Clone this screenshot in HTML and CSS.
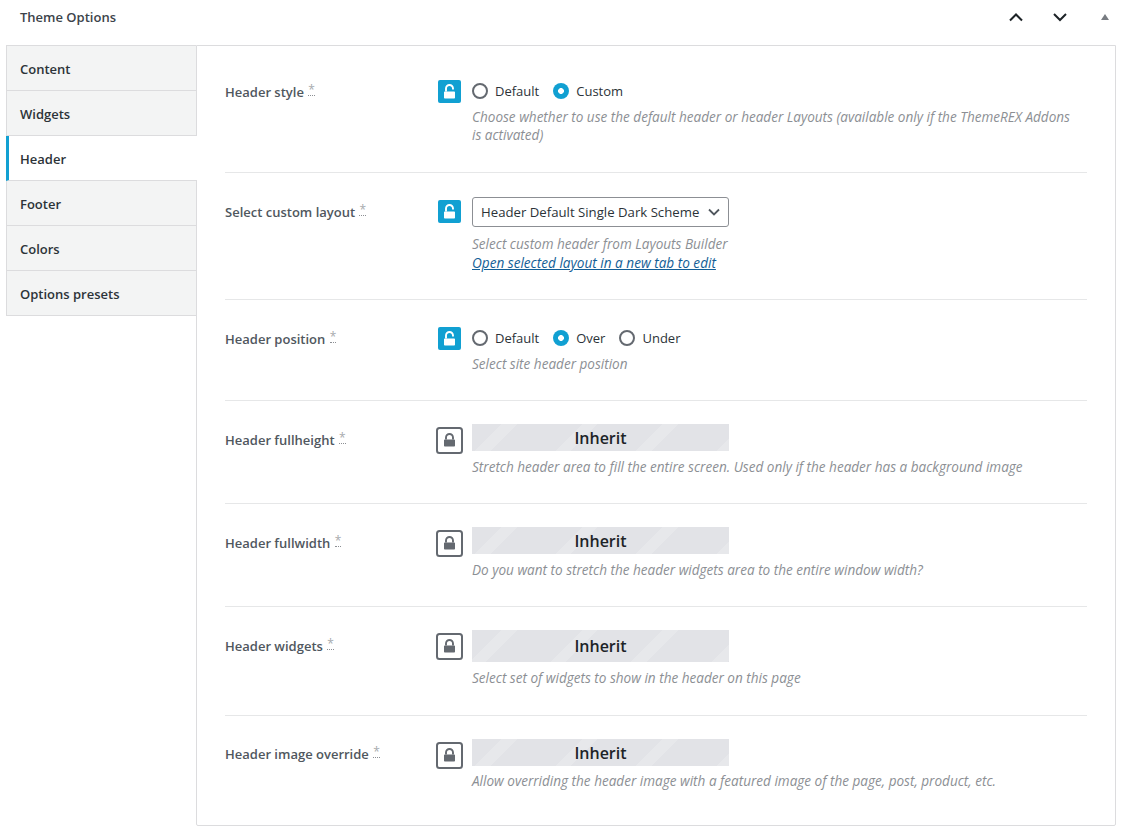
FILE: index.html
```html
<!DOCTYPE html>
<html lang="en">
<head>
<meta charset="utf-8">
<title>Theme Options</title>
<link rel="stylesheet" href="styles.css">
</head>
<body>
<header class="bar">
  <h2 class="bar-title">Theme Options</h2>
  <div class="bar-actions">
    <svg class="chev" viewBox="0 0 16 10"><path d="M2 8.500 8 2.500l6 6" /></svg>
    <svg class="chev" viewBox="0 0 16 10"><path d="M2 2 8 8l6-6" /></svg>
    <span class="tri"></span>
  </div>
</header>
<main class="panel">
  <nav class="tabs">
    <a class="tab">Content</a>
    <a class="tab">Widgets</a>
    <a class="tab active">Header</a>
    <a class="tab">Footer</a>
    <a class="tab">Colors</a>
    <a class="tab">Options presets</a>
  </nav>
  <section class="fields">
    <div class="row first">
      <div class="label">Header style <span class="star">*</span></div>
      <svg class="lock open" viewBox="0 0 23 23"><use href="#u"/></svg>
      <div class="ctl">
        <div class="radios">
          <span class="radio">Default</span>
          <span class="radio on">Custom</span>
        </div>
        <p class="hint">Choose whether to use the default header or header Layouts (available only if the ThemeREX Addons is activated)</p>
      </div>
    </div>
    <div class="row sel">
      <div class="label">Select custom layout <span class="star">*</span></div>
      <svg class="lock open" viewBox="0 0 23 23"><use href="#u"/></svg>
      <div class="ctl">
        <div class="select">Header Default Single Dark Scheme
          <svg class="caret" viewBox="0 0 12 8"><path d="M1 1.500l5 5 5-5"/></svg>
        </div>
        <p class="hint">Select custom header from Layouts Builder</p>
        <a class="hint-link">Open selected layout in a new tab to edit</a>
      </div>
    </div>
    <div class="row pos">
      <div class="label">Header position <span class="star">*</span></div>
      <svg class="lock open" viewBox="0 0 23 23"><use href="#u"/></svg>
      <div class="ctl">
        <div class="radios">
          <span class="radio">Default</span>
          <span class="radio on">Over</span>
          <span class="radio">Under</span>
        </div>
        <p class="hint">Select site header position</p>
      </div>
    </div>
    <div class="row inh">
      <div class="label">Header fullheight <span class="star">*</span></div>
      <svg class="lock closed" viewBox="0 0 27 27"><use href="#l"/></svg>
      <div class="ctl">
        <div class="inherit">Inherit</div>
        <p class="hint">Stretch header area to fill the entire screen. Used only if the header has a background image</p>
      </div>
    </div>
    <div class="row inh">
      <div class="label">Header fullwidth <span class="star">*</span></div>
      <svg class="lock closed" viewBox="0 0 27 27"><use href="#l"/></svg>
      <div class="ctl">
        <div class="inherit">Inherit</div>
        <p class="hint">Do you want to stretch the header widgets area to the entire window width?</p>
      </div>
    </div>
    <div class="row inh tall">
      <div class="label">Header widgets <span class="star">*</span></div>
      <svg class="lock closed" viewBox="0 0 27 27"><use href="#l"/></svg>
      <div class="ctl">
        <div class="inherit">Inherit</div>
        <p class="hint">Select set of widgets to show in the header on this page</p>
      </div>
    </div>
    <div class="row inh last">
      <div class="label">Header image override <span class="star">*</span></div>
      <svg class="lock closed" viewBox="0 0 27 27"><use href="#l"/></svg>
      <div class="ctl">
        <div class="inherit">Inherit</div>
        <p class="hint">Allow overriding the header image with a featured image of the page, post, product, etc.</p>
      </div>
    </div>
  </section>
</main>
<svg class="defs" width="0" height="0">
  <symbol id="u" viewBox="0 0 23 23">
    <rect width="23" height="23" rx="2" fill="#11a0d2"/>
    <path d="M6.800 11.500h9.400a.8.8 0 0 1 .8.8v5.400a.8.8 0 0 1-.8.8H6.800a.8.8 0 0 1-.8-.8v-5.400a.8.8 0 0 1 .8-.8z" fill="#fff"/>
    <path d="M8 11.500V8.500a3.500 3.500 0 0 1 7 0v1" fill="none" stroke="#fff" stroke-width="1.900"/>
  </symbol>
  <symbol id="l" viewBox="0 0 27 27">
    <rect x="1" y="1" width="25" height="25" rx="2.500" fill="none" stroke="#646970" stroke-width="2"/>
    <path d="M8.800 12.500h9.400a.8.8 0 0 1 .8.8v5.400a.8.8 0 0 1-.8.8H8.800a.8.8 0 0 1-.8-.8v-5.400a.8.8 0 0 1 .8-.8z" fill="#646970"/>
    <path d="M10 12.500V10.500a3.500 3.500 0 0 1 7 0v2" fill="none" stroke="#646970" stroke-width="1.900"/>
  </symbol>
</svg>
</body>
</html>
```
FILE: styles.css
```css
* { box-sizing: border-box; }
html, body { margin: 0; }
body {
  width: 1121px;
  height: 826px;
  overflow: hidden;
  background: #fff;
  font-family: "Open Sans", "Noto Sans", sans-serif;
  font-size: 13px;
  color: #2c3338;
}
.defs { position: absolute; }
.bar {
  height: 45px;
  padding: 0 12px 11px 20px;
  display: flex;
  align-items: center;
  justify-content: space-between;
}
.bar-title { margin: 0; font-size: 13px; font-weight: 600; color: #3c434a; }
.bar-actions { display: flex; align-items: center; }
.chev { width: 16px; height: 10px; margin-right: 28px; fill: none; stroke: #1d2327; stroke-width: 2; }
.chev + .chev { margin-right: 33px; }
.tri {
  width: 0; height: 0;
  border-left: 4px solid transparent;
  border-right: 4px solid transparent;
  border-bottom: 6px solid #787c82;
}
.panel {
  margin: 0 5px 0 6px;
  height: 781px;
  display: flex;
  align-items: flex-start;
}
.tabs { width: 190px; flex: none; border-top: 1px solid #dcdcde; border-left: 1px solid #dcdcde; }
.tab {
  display: flex;
  align-items: center;
  height: 45px;
  padding: 1px 0 0 13px;
  background: #f3f4f4;
  border-bottom: 1px solid #dcdcde;
  font-weight: 600;
  font-size: 13px;
  color: #2c3338;
}
.tab.active {
  position: relative;
  z-index: 1;
  margin: 0 -1px 0 -1px;
  background: #fff;
  border-left: 3px solid #11a0d2;
  padding-left: 11px;
}
.fields {
  flex: 1;
  height: 781px;
  padding: 0 28px;
  border: 1px solid #dcdcde;
  border-radius: 0 0 2px 2px;
}
.row {
  display: flex;
  align-items: flex-start;
  padding: 24px 0 27px;
  border-bottom: 1px solid #e6e7e8;
}
.row.first { padding-top: 34px; padding-bottom: 28px; }
.row.inh { padding-top: 23px; }
.row.tall { padding-bottom: 28px; }
.row.tall .inherit { height: 32px; }
.row.last { border-bottom: 0; }
.label {
  width: 213px;
  flex: none;
  font-size: 13px;
  font-weight: 600;
  color: #50575e;
  line-height: 18px;
  padding-top: 6px;
}
.row.first .label { padding-top: 3px; }
.row.inh .label { padding-top: 7px; }
.row.last .label { padding-top: 6px; }
.star {
  color: #a7aaad;
  font-weight: 400;
  border-bottom: 1px dotted #8c8f94;
  font-size: 12px;
  line-height: 10px;
  display: inline-block;
  height: 11px;
  vertical-align: 3px;
  margin-left: 1px;
}
.lock { flex: none; display: block; }
.lock.open { width: 23px; height: 23px; margin: 3px 11px 0 0; }
.row.first .lock.open { margin-top: 0; }
.lock.closed { width: 27px; height: 27px; margin: 3px 9px 0 -2px; }
.ctl { flex: 1; min-width: 0; }
.radios { display: flex; gap: 14px; height: 22px; margin-top: 3px; align-items: center; font-size: 13px; color: #2c3338; }
.row.first .radios { margin-top: 0; }
.radio { display: flex; align-items: center; gap: 7px; }
.radio::before {
  content: "";
  box-sizing: border-box;
  width: 16px;
  height: 16px;
  border-radius: 50%;
  border: 2px solid #646970;
  background: #fff;
}
.radio.on::before {
  border: 0;
  background: radial-gradient(circle, #fff 0 2.600px, #11a0d2 3.200px);
}
.hint {
  margin: 7px 0 0;
  font-size: 13.560px;
  line-height: 18px;
  font-style: italic;
  color: #8c8f94;
}
.row.first .hint { margin-top: 6px; padding-right: 12px; }
.row.pos .hint { margin-top: 6px; }
.row.last .hint { margin-top: 6px; }
.select {
  width: 257px;
  height: 30px;
  border: 1px solid #8c8f94;
  border-radius: 3px;
  padding: 0 8px;
  display: flex;
  align-items: center;
  justify-content: space-between;
  font-size: 13.200px;
  white-space: nowrap;
  color: #2c3338;
}
.caret { width: 12px; height: 8px; fill: none; stroke: #50575e; stroke-width: 1.800; flex: none; }
.row.sel .hint { margin-top: 8px; }
.hint-link {
  display: block;
  margin-top: 1px;
  font-size: 13.600px;
  line-height: 18px;
  font-style: italic;
  color: #135e96;
  text-decoration: underline;
}
.inherit {
  width: 257px;
  height: 27px;
  display: flex;
  align-items: center;
  justify-content: center;
  font-size: 16px;
  font-weight: 600;
  color: #1d2327;
  background-color: #e2e3e7;
  background-image: repeating-linear-gradient(135deg, #e2e3e7 0 21px, #e7e8eb 21px 32px, #e2e3e7 32px 57px);
}
```
